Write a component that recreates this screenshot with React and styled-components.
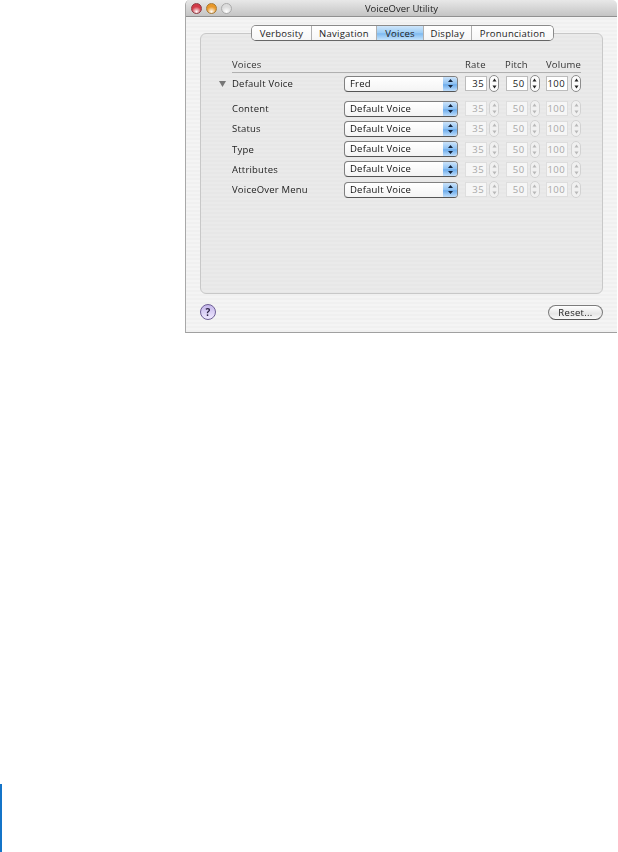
import React from 'react';
import styled, { createGlobalStyle } from 'styled-components';

const tabs = [
  { label: 'Verbosity', width: 60 },
  { label: 'Navigation', width: 65 },
  { label: 'Voices', width: 47, active: true },
  { label: 'Display', width: 48 },
  { label: 'Pronunciation', width: 81 },
];

const voiceRows = [
  { label: 'Content' },
  { label: 'Status' },
  { label: 'Type' },
  { label: 'Attributes' },
  { label: 'VoiceOver Menu' },
];

const App = () => (
  <Page>
    <GlobalStyle />
    <Window>
      <TitleBar>
        <Lights>
          <Light $color="#d23a48" $edge="#8e3a40" />
          <Light $color="#e8982a" $edge="#a87a34" />
          <Light $color="#dcdcdc" $edge="#ababab" />
        </Lights>
        <Title>VoiceOver Utility</Title>
      </TitleBar>
      <Content>
        <TabBar>
          {tabs.map(tab => (
            <Tab key={tab.label} $width={tab.width} $active={tab.active}>{tab.label}</Tab>
          ))}
        </TabBar>
        <GroupBox>
          <HeaderRow>
            <HeaderVoices>Voices</HeaderVoices>
            <HeaderCol $width={40}>Rate</HeaderCol>
            <HeaderCol $width={41}>Pitch</HeaderCol>
            <HeaderCol $width={35}>Volume</HeaderCol>
          </HeaderRow>
          <VoiceRow $first>
            <Disclosure>
              <svg width="7" height="6" viewBox="0 0 7 6"><path d="M0 0h7L3.5 6z" fill="#777" /></svg>
            </Disclosure>
            <RowLabel>Default Voice</RowLabel>
            <PopUp label="Fred" />
            <Field value="35" />
            <Field value="50" />
            <Field value="100" />
          </VoiceRow>
          <Rows>
            {voiceRows.map(row => (
              <VoiceRow key={row.label}>
                <Disclosure />
                <RowLabel>{row.label}</RowLabel>
                <PopUp label="Default Voice" />
                <Field value="35" disabled />
                <Field value="50" disabled />
                <Field value="100" disabled />
              </VoiceRow>
            ))}
          </Rows>
        </GroupBox>
        <Footer>
          <HelpButton>?</HelpButton>
          <ResetButton>Reset...</ResetButton>
        </Footer>
      </Content>
    </Window>
    <MarginBar />
  </Page>
);

const PopUp = ({ label }) => (
  <Select>
    <SelectLabel>{label}</SelectLabel>
    <SelectArrows>
      <svg width="7" height="11" viewBox="0 0 7 11">
        <path d="M3.5 1L6 4H1zM3.5 10L1 7H6z" fill="#14243c" />
      </svg>
    </SelectArrows>
  </Select>
);

const Field = ({ value, disabled }) => (
  <FieldGroup>
    <NumberBox $disabled={disabled}>{value}</NumberBox>
    <Stepper $disabled={disabled}>
      <svg width="5" height="13" viewBox="0 0 5 13">
        <path d="M2.5 1.5L4.5 4.5H0.5zM2.5 11.5L0.5 8.5H4.5z" fill={disabled ? '#b8b8b8' : '#222'} />
      </svg>
    </Stepper>
  </FieldGroup>
);

const GlobalStyle = createGlobalStyle`
  html, body {
    margin: 0;
    padding: 0;
    background: #fff;
  }
`;

const Page = styled.div`
  width: 618px;
  height: 852px;
  display: flex;
  flex-direction: column;
  justify-content: space-between;
  font-family: "Open Sans", "DejaVu Sans", sans-serif;
  font-size: 9.5px;
  color: #2a2a2a;
`;

const Window = styled.div`
  box-sizing: border-box;
  width: 432px;
  height: 333px;
  margin-left: 185px;
  border-left: 1px solid #a8a8a8;
  border-bottom: 1px solid #a0a0a0;
  border-radius: 5px 5px 0 0;
  background: repeating-linear-gradient(180deg, #f4f4f4 0, #f4f4f4 2px, #f0f0f0 2px, #f0f0f0 4px);
  display: flex;
  flex-direction: column;
  filter: blur(0.35px);
`;

const TitleBar = styled.div`
  box-sizing: border-box;
  height: 17px;
  display: flex;
  align-items: center;
  justify-content: center;
  position: relative;
  background: linear-gradient(180deg, #e8e8e8, #c4c4c4);
  border-bottom: 1px solid #909090;
  border-radius: 5px 5px 0 0;
`;

const Lights = styled.div`
  position: absolute;
  left: 5px;
  top: 3px;
  display: flex;
  gap: 4px;
`;

const Light = styled.span`
  box-sizing: border-box;
  width: 11px;
  height: 11px;
  border-radius: 50%;
  background: radial-gradient(circle at 50% 85%, #fff 0, ${p => p.$color} 55%, ${p => p.$color} 100%);
  border: 1px solid ${p => p.$edge};
`;

const Title = styled.div`
  font-size: 9.5px;
  color: #222;
`;

const Content = styled.div`
  flex: 1;
  display: flex;
  flex-direction: column;
  padding: 8px 14px 0 14px;
`;

const TabBar = styled.div`
  box-sizing: border-box;
  display: flex;
  align-self: flex-start;
  margin-left: 51px;
  height: 16px;
  background: #fff;
  border: 1px solid #8a8a8a;
  border-bottom-color: #666;
  border-radius: 5px;
  overflow: hidden;
  position: relative;
  z-index: 1;
`;

const Tab = styled.div`
  box-sizing: border-box;
  width: ${p => p.$width}px;
  display: flex;
  align-items: center;
  justify-content: center;
  color: #222;
  letter-spacing: 0.25px;
  border-right: 1px solid #b0b0b0;
  background: ${p => p.$active
    ? 'linear-gradient(180deg, #cfe6fb 0%, #9accf5 50%, #7fbaf0 55%, #c4e3fc 100%)'
    : 'linear-gradient(180deg, #fff, #f6f6f6)'};

  &:last-child {
    border-right: none;
  }
`;

const GroupBox = styled.div`
  box-sizing: border-box;
  height: 261px;
  margin-top: -8px;
  padding: 25px 21px 0 18px;
  border: 1px solid #c8c8c8;
  border-radius: 6px;
  background: repeating-linear-gradient(180deg, #eaeaea 0, #eaeaea 2px, #e7e7e7 2px, #e7e7e7 4px);
`;

const HeaderRow = styled.div`
  box-sizing: border-box;
  display: flex;
  align-items: flex-end;
  height: 14px;
  margin-left: 13px;
  padding-bottom: 1px;
  border-bottom: 1px solid #b0b0b0;
  color: #333;
  letter-spacing: 0.2px;
`;

const HeaderVoices = styled.div`
  flex: 1;
`;

const HeaderCol = styled.div`
  width: ${p => p.$width}px;
  text-align: left;
  white-space: nowrap;
`;

const VoiceRow = styled.div`
  display: flex;
  align-items: center;
  height: 17px;
  margin-top: ${p => (p.$first ? '2px' : '0')};
`;

const Rows = styled.div`
  display: flex;
  flex-direction: column;
  gap: 3.25px;
  margin-top: 8px;
`;

const Disclosure = styled.div`
  width: 13px;
  display: flex;
  align-items: center;
`;

const RowLabel = styled.div`
  width: 112px;
  color: #222;
  letter-spacing: 0.2px;
`;

const Select = styled.div`
  box-sizing: border-box;
  width: 114px;
  height: 16px;
  margin-right: 7px;
  display: flex;
  border: 1px solid #808080;
  border-bottom-color: #555;
  border-radius: 4px;
  overflow: hidden;
  background: linear-gradient(180deg, #fff, #f4f4f4);
`;

const SelectLabel = styled.div`
  flex: 1;
  padding-left: 5px;
  line-height: 14px;
  color: #111;
  letter-spacing: 0.2px;
`;

const SelectArrows = styled.div`
  width: 14px;
  display: flex;
  align-items: center;
  justify-content: center;
  background: linear-gradient(180deg, #cbe3fa 0%, #8cc0f2 50%, #6cacec 55%, #c0defb 100%);
`;

const FieldGroup = styled.div`
  width: 40.5px;
  display: flex;
  align-items: center;
  gap: 2px;

  &:last-child {
    width: 35px;
    gap: 3px;
  }
`;

const NumberBox = styled.div`
  box-sizing: border-box;
  width: 22px;
  height: 15px;
  padding-right: 2px;
  text-align: right;
  line-height: 14px;
  background: ${p => (p.$disabled ? '#f6f6f6' : '#fff')};
  color: ${p => (p.$disabled ? '#a8a8a8' : '#1c1c1c')};
  border: 1px solid ${p => (p.$disabled ? '#dedede' : '#bcbcbc')};
  letter-spacing: 0.4px;
`;

const Stepper = styled.div`
  box-sizing: border-box;
  width: 10px;
  height: 17px;
  flex: none;
  display: flex;
  align-items: center;
  justify-content: center;
  border-radius: 5px;
  border: 1px solid ${p => (p.$disabled ? '#d2d2d2' : '#8c8c8c')};
  background: ${p => (p.$disabled ? '#f0f0f0' : '#fbfbfb')};
`;

const Footer = styled.div`
  display: flex;
  align-items: center;
  justify-content: space-between;
  margin-top: 10px;
`;

const HelpButton = styled.div`
  box-sizing: border-box;
  width: 16px;
  height: 16px;
  border-radius: 50%;
  border: 1px solid #6e5f96;
  background: linear-gradient(180deg, #c4b6ea, #efe9ff);
  display: flex;
  align-items: center;
  justify-content: center;
  font-size: 10px;
  font-weight: 700;
  color: #2c2444;
`;

const ResetButton = styled.div`
  box-sizing: border-box;
  width: 55px;
  height: 15px;
  border-radius: 8px;
  border: 1px solid #7c7c7c;
  border-bottom-color: #555;
  background: linear-gradient(180deg, #fff, #e6e6e6 60%, #fafafa);
  display: flex;
  align-items: center;
  justify-content: center;
  color: #222;
  letter-spacing: 0.3px;
`;

const MarginBar = styled.div`
  width: 2px;
  height: 68px;
  background: #1474c8;
`;

export default App;
